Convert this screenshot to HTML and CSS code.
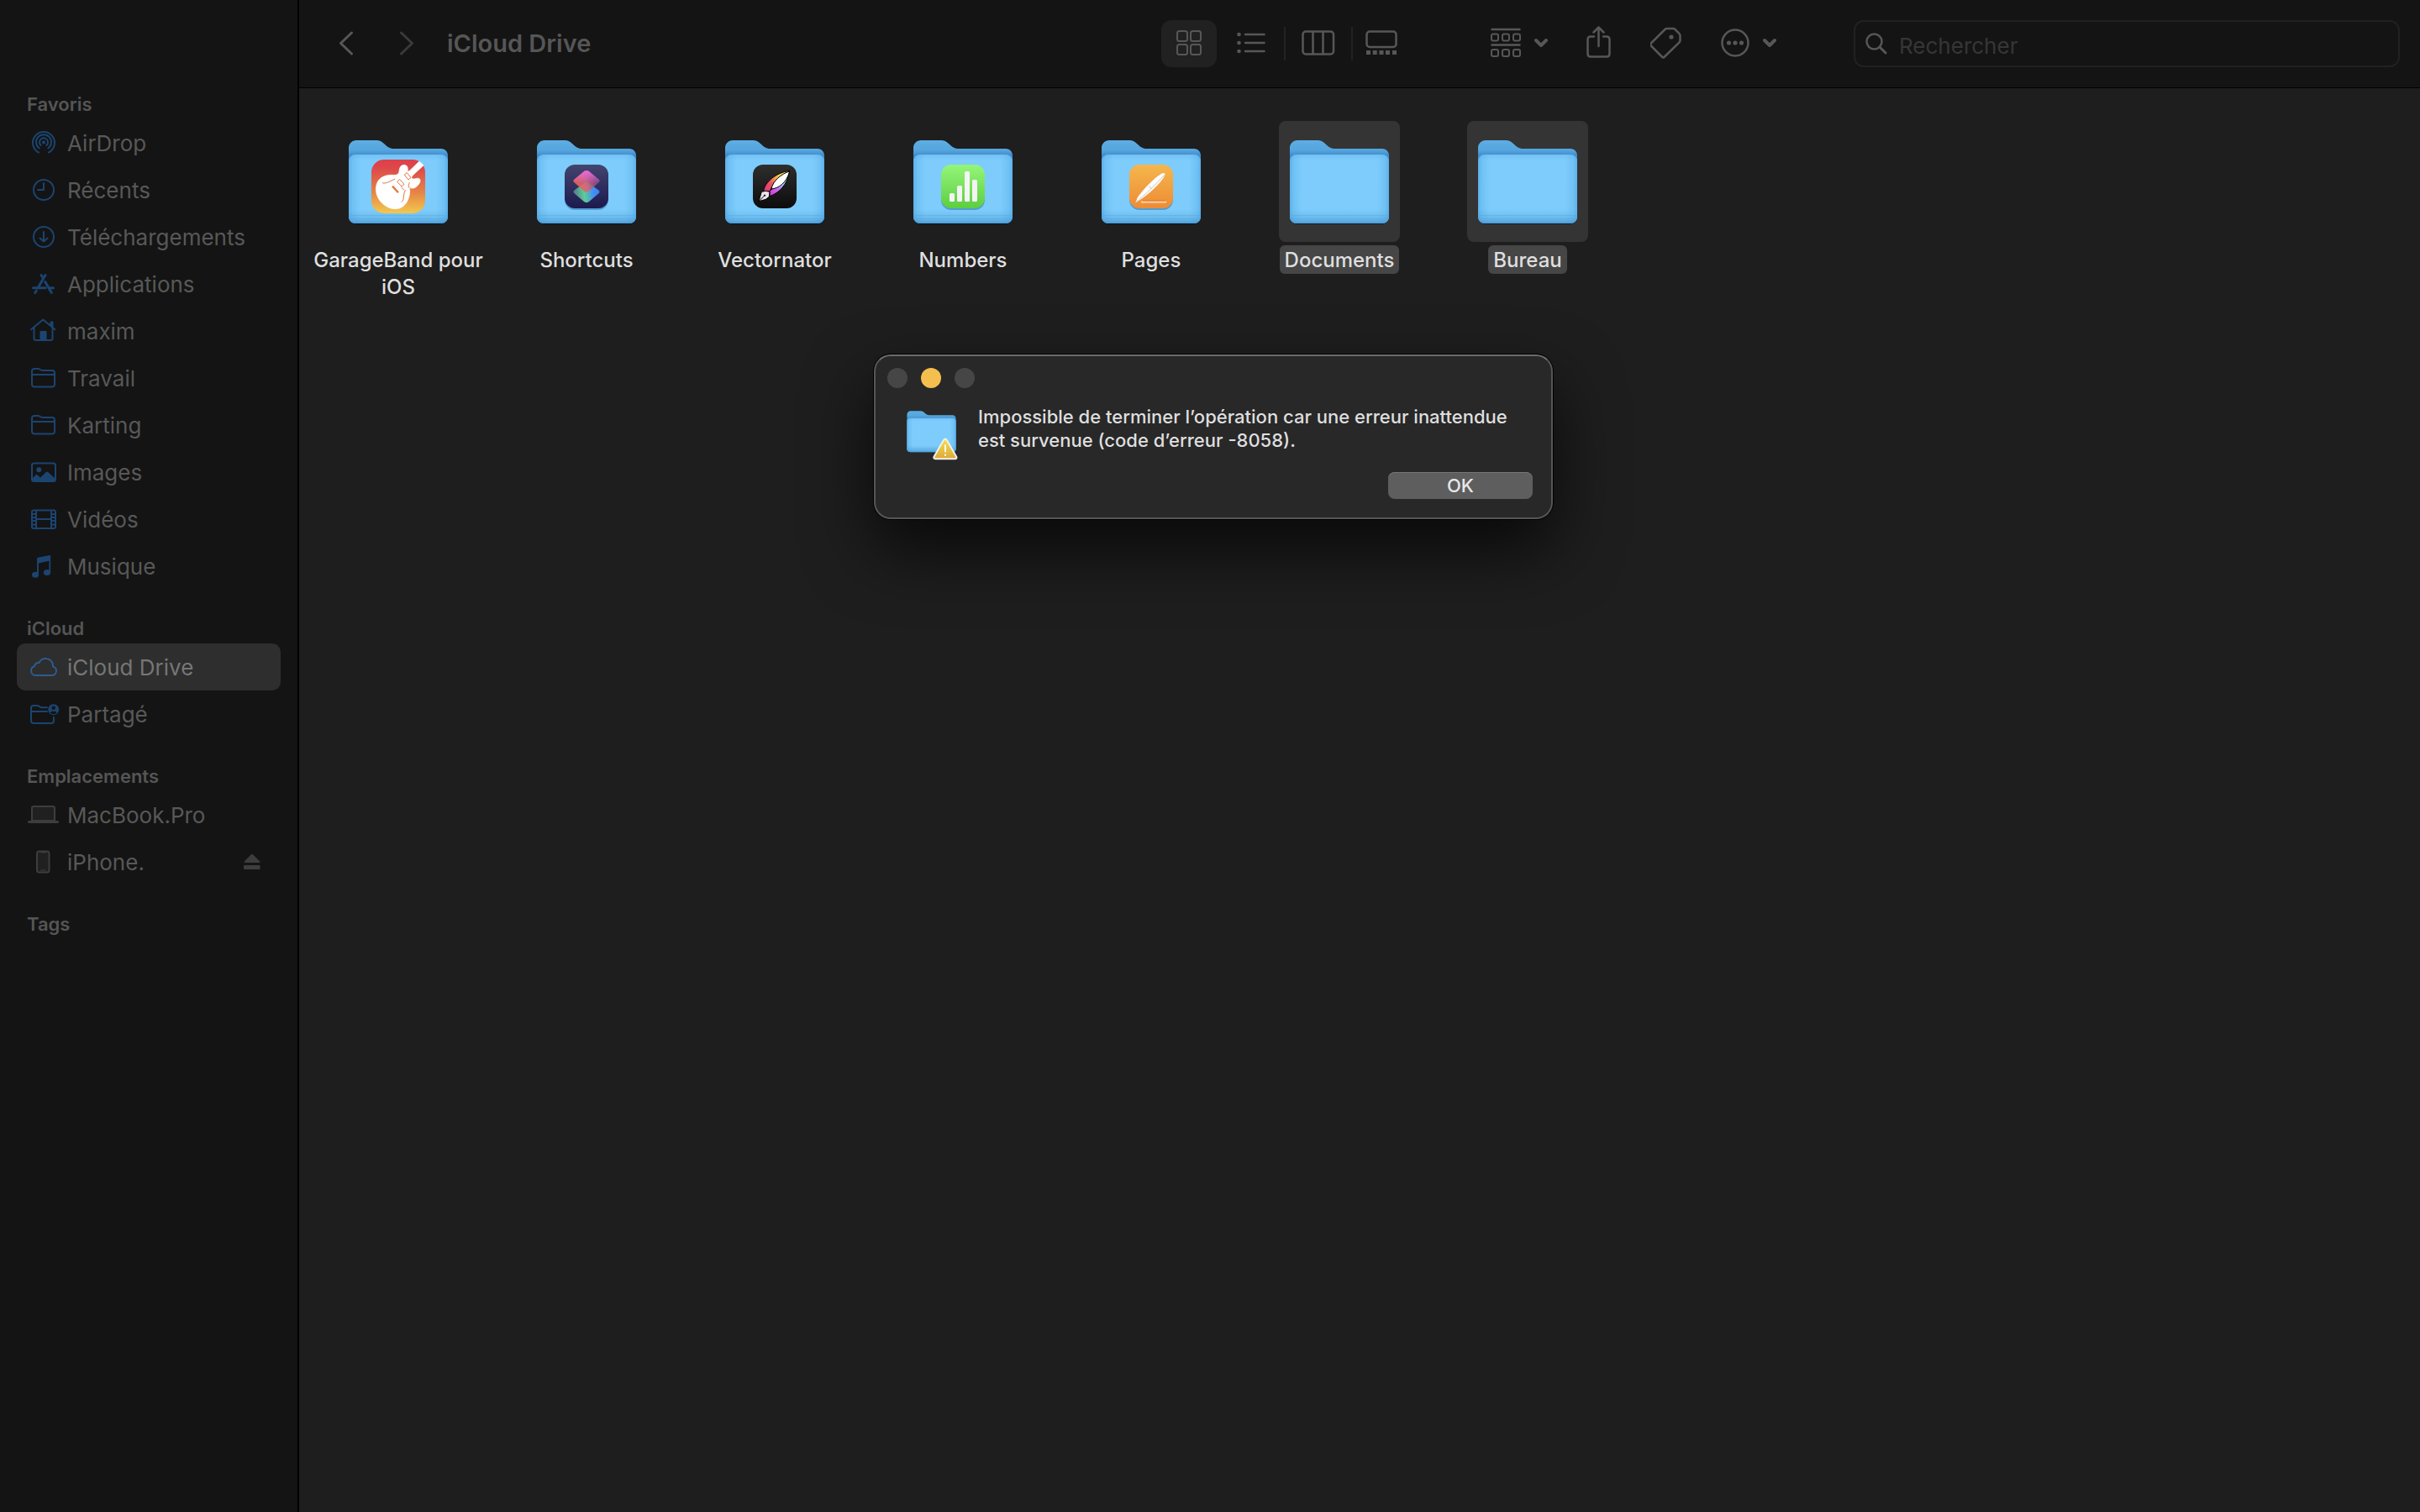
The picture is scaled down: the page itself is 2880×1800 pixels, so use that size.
FILE: index.html
```html
<!DOCTYPE html>
<html lang="fr">
<head>
  <meta charset="utf-8">
  <title>iCloud Drive</title>
  <link rel="stylesheet" href="styles.css">
</head>
<body>
  <!-- shared shapes -->
  <svg class="defs" width="0" height="0" aria-hidden="true">
    <defs>
      <linearGradient id="folder-back" x1="0" y1="0" x2="0" y2="1">
        <stop offset="0" stop-color="#5eaee4"/>
        <stop offset=".12" stop-color="#55a5de"/>
        <stop offset=".19" stop-color="#3f88ca"/>
        <stop offset="1" stop-color="#4a9edb"/>
      </linearGradient>
      <linearGradient id="folder-front" x1="0" y1="0" x2="0" y2="1">
        <stop offset="0" stop-color="#72c1f3"/>
        <stop offset=".08" stop-color="#7dccfc"/>
        <stop offset=".8" stop-color="#7dccfb"/>
        <stop offset=".87" stop-color="#74c3f3"/>
        <stop offset=".94" stop-color="#66b6ea"/>
        <stop offset="1" stop-color="#4c9fdc"/>
      </linearGradient>
      <linearGradient id="folder-sides" x1="0" y1="0" x2="1" y2="0">
        <stop offset="0" stop-color="#3c96d8" stop-opacity=".5"/>
        <stop offset=".04" stop-color="#3c96d8" stop-opacity=".2"/>
        <stop offset=".12" stop-color="#3c96d8" stop-opacity="0"/>
        <stop offset=".88" stop-color="#3c96d8" stop-opacity="0"/>
        <stop offset=".96" stop-color="#3c96d8" stop-opacity=".2"/>
        <stop offset="1" stop-color="#3c96d8" stop-opacity=".5"/>
      </linearGradient>
      <linearGradient id="garage" x1="0" y1="0" x2="0" y2="1">
        <stop offset="0" stop-color="#dc404b"/>
        <stop offset=".15" stop-color="#dd474a"/>
        <stop offset=".6" stop-color="#e58345"/>
        <stop offset="1" stop-color="#f3c84f"/>
      </linearGradient>
      <linearGradient id="shortcuts" x1="0" y1="0" x2="0" y2="1">
        <stop offset="0" stop-color="#43446f"/>
        <stop offset="1" stop-color="#1c1a4e"/>
      </linearGradient>
      <linearGradient id="shard-top" x1=".1" y1=".7" x2=".9" y2=".5">
        <stop offset="0" stop-color="#ee6350"/>
        <stop offset=".5" stop-color="#d4667c"/>
        <stop offset="1" stop-color="#7e4a86"/>
      </linearGradient>
      <linearGradient id="shard-pink" x1="0" y1="0" x2="0" y2="1">
        <stop offset="0" stop-color="#ee69e0"/>
        <stop offset=".6" stop-color="#ee69e0" stop-opacity="0"/>
      </linearGradient>
      <linearGradient id="shard-bottom" x1="0" y1=".5" x2="1" y2=".4">
        <stop offset="0" stop-color="#4f7a88"/>
        <stop offset=".4" stop-color="#60cb98"/>
        <stop offset=".75" stop-color="#4390f0"/>
        <stop offset="1" stop-color="#3a7dfb"/>
      </linearGradient>
      <linearGradient id="vector" x1="0" y1="0" x2="0" y2="1">
        <stop offset="0" stop-color="#2e2e2d"/>
        <stop offset="1" stop-color="#0c0c0d"/>
      </linearGradient>
      <linearGradient id="rainbow-left" x1="0" y1="1" x2="1" y2="0">
        <stop offset="0" stop-color="#d9367e"/>
        <stop offset=".35" stop-color="#ea5560"/>
        <stop offset=".65" stop-color="#f5c747"/>
        <stop offset="1" stop-color="#e9ef7a"/>
      </linearGradient>
      <linearGradient id="rainbow-right" x1="0" y1="1" x2="1" y2="0">
        <stop offset="0" stop-color="#d52fd0"/>
        <stop offset=".35" stop-color="#c66cf0"/>
        <stop offset=".6" stop-color="#9fc6f5"/>
        <stop offset="1" stop-color="#58e0c0"/>
      </linearGradient>
      <linearGradient id="numbers" x1="0" y1="0" x2="0" y2="1">
        <stop offset="0" stop-color="#95f57a"/>
        <stop offset="1" stop-color="#5cce40"/>
      </linearGradient>
      <linearGradient id="pages" x1="0" y1="0" x2="0" y2="1">
        <stop offset="0" stop-color="#f5b74c"/>
        <stop offset="1" stop-color="#ee8b36"/>
      </linearGradient>
      <linearGradient id="warning" x1="0" y1="0" x2="0" y2="1">
        <stop offset="0" stop-color="#f5e04c"/>
        <stop offset="1" stop-color="#dca93a"/>
      </linearGradient>
    </defs>

    <symbol id="folder" viewBox="0 0 144 144">
      <rect x="14" y="100" width="116" height="23" rx="8" fill="#000" opacity=".45"/>
      <path fill="url(#folder-back)" d="M13 32c0-5 4-9 9-9h24c4 0 6 1.500 9 4 4 3.500 6 6 12 6h56c5 0 8 4 8 8v73c0 5-4 8-8 8H21c-5 0-8-4-8-8z"/>
      <rect x="13" y="40" width="118" height="82" rx="8" fill="url(#folder-front)"/>
      <rect x="13" y="40" width="118" height="82" rx="8" fill="url(#folder-sides)"/>
      <path stroke="#5aaade" stroke-width="1" opacity=".5" d="M14 112.500h116M14 116.500h116"/>
    </symbol>

    <symbol id="small-folder" viewBox="0 0 40 40">
      <path class="line" d="M6 27.500V12c0-2 1-3 3-3h4c3 0 3 2 6 2h11c2 0 3 1 3 3v13.500c0 2-1 3-3 3H9c-2 0-3-1-3-3zM6 16h27"/>
    </symbol>
  </svg>

  <div class="window">
    <nav class="sidebar">
      <h2>Favoris</h2>
      <ul>
        <li><a href="#">
          <svg viewBox="0 0 40 40"><path class="line" d="M14 31.500a13 13 0 1 1 12 0M14.700 26.500a9 9 0 1 1 10.600 0M16.600 23a5 5 0 1 1 6.800 0"/><circle cx="20" cy="19.500" r="2"/></svg>
          AirDrop</a></li>
        <li><a href="#">
          <svg viewBox="0 0 40 40"><circle class="line" cx="20" cy="20" r="12"/><path class="line" d="M20 12v8h-7"/></svg>
          Récents</a></li>
        <li><a href="#">
          <svg viewBox="0 0 40 40"><circle class="line" cx="20" cy="20" r="12"/><path class="line" d="M20 14v11.500M15.500 21.500l4.500 4 4.500-4"/></svg>
          Téléchargements</a></li>
        <li><a href="#">
          <svg viewBox="0 0 40 40"><path class="line thick" d="M22 9.500l-8.500 14.500M17 9.500l1.500 2.500M7.500 24.700H22M26.500 24.700h5M11.300 28.200l-1.500 2.300M21.700 17.500l7.600 13"/></svg>
          Applications</a></li>
        <li><a href="#">
          <svg viewBox="0 0 40 40"><path class="line" d="M5 18.300L19.200 6.500 33.500 18.300M8.500 16v13c0 1.300.7 2 2 2h18c1.300 0 2-.7 2-2V9.500h-2V14"/><path d="M15.500 21c0-.7.300-1 1-1h6c.7 0 1 .3 1 1v10h-8z"/></svg>
          maxim</a></li>
        <li><a href="#"><svg><use href="#small-folder"/></svg>Travail</a></li>
        <li><a href="#"><svg><use href="#small-folder"/></svg>Karting</a></li>
        <li><a href="#">
          <svg viewBox="0 0 40 40"><rect class="line" x="6" y="9.500" width="28" height="21.500" rx="2.500"/><circle cx="14.300" cy="17.300" r="3"/><path d="M6 28l4.500-4.600c.7-.6 1.300-.6 2 0L16 26.500l6.500-6.300c1-1 2-1 3 0L34 28v3H6z"/></svg>
          Images</a></li>
        <li><a href="#">
          <svg viewBox="0 0 40 40"><rect class="line" x="6" y="9.500" width="28" height="21.500" rx="2"/><path class="line" d="M11 10v21M29 10v21M11 20h18M6 14h5M6 18h5M6 22h5M6 26.500h5M29 14h5M29 18h5M29 22h5M29 26.500h5"/></svg>
          Vidéos</a></li>
        <li><a href="#">
          <svg viewBox="0 0 40 40"><path d="M12 11c0-.7.300-1 1-1.200L27 7c.8-.2 1.200 0 1.200.8V27h-1.800V13.800L14 16.500V30h-2z"/><ellipse cx="10" cy="30.200" rx="4" ry="3.500"/><ellipse cx="24" cy="27.400" rx="4.200" ry="3.500"/></svg>
          Musique</a></li>
      </ul>

      <h2>iCloud</h2>
      <ul>
        <li class="selected"><a href="#">
          <svg viewBox="0 0 40 40"><path class="line" d="M11 30c-3.500 0-6-2.400-6-5.500 0-2.600 1.600-4.600 4-5.200.3-3 2.600-4.700 5.400-4.300C15.800 12 18.800 10 22.300 10c5 0 8.700 3.800 8.700 8.600v1c2.500.6 4 2.400 4 5 0 3-2.300 5.400-5.500 5.400z"/></svg>
          iCloud Drive</a></li>
        <li><a href="#">
          <svg viewBox="0 0 40 40"><path class="line" d="M24 12.200h-6c-3 0-3-2.200-6-2.200H8c-2 0-3 1-3 3v15c0 2 1 3 3 3h21c2 0 3-1 3-3v-4M5 17h19"/><circle cx="31.700" cy="14.700" r="6.500"/><circle class="hole" cx="31.700" cy="12.800" r="2.200"/><path class="hole" d="M27.700 18.500c1-2.400 7-2.400 8 0-2 2.200-6 2.200-8 0z"/></svg>
          Partagé</a></li>
      </ul>

      <h2>Emplacements</h2>
      <ul class="devices">
        <li><a href="#">
          <svg viewBox="0 0 40 40"><path class="screen" d="M6 27V12c0-1.300.7-2 2-2h23c1.300 0 2 .7 2 2v15z"/><rect x="1" y="27" width="37" height="3" rx="1.500"/></svg>
          MacBook.Pro</a></li>
        <li><a href="#">
          <svg viewBox="0 0 40 40"><rect class="screen" x="12" y="7.500" width="14.500" height="25" rx="2.500"/><path d="M16 8h7l-1 1.500h-5zM16 29.500h6.500v1H16z"/></svg>
          iPhone.</a>
          <button class="eject" aria-label="Éjecter"><svg viewBox="0 0 20 20"><path d="M9 1.300c.6-.7 1.400-.7 2 0l8 8c.8 1 .5 1.700-.7 1.700H1.700C.5 11 .2 10.300 1 9.300z"/><rect x="0" y="14" width="19.500" height="5" rx="1.200"/></svg></button></li>
      </ul>

      <h2>Tags</h2>
    </nav>

    <main>
      <header class="toolbar">
        <button class="nav-button" aria-label="Précédent"><svg width="20" height="32" viewBox="0 0 20 32"><path class="line" d="M16.500 3L3.500 15.500l13 12.500"/></svg></button>
        <button class="nav-button forward" aria-label="Suivant" disabled><svg width="20" height="32" viewBox="0 0 20 32"><path class="line" d="M3.500 3l13 12.500-13 12.500"/></svg></button>
        <h1>iCloud Drive</h1>

        <div class="views">
          <button class="active" aria-label="Icônes"><svg width="30" height="30" viewBox="0 0 30 30"><g class="line"><rect x="1" y="1" width="12" height="12" rx="2.500"/><rect x="17" y="1" width="12" height="12" rx="2.500"/><rect x="1" y="17" width="12" height="12" rx="2.500"/><rect x="17" y="17" width="12" height="12" rx="2.500"/></g></svg></button>
          <button class="list" aria-label="Liste"><svg width="34" height="30" viewBox="0 0 34 30"><path class="line thin" d="M10 5h22.500M10 15h22.500M10 25h22.500"/><circle cx="2.500" cy="5" r="2.300"/><circle cx="2.500" cy="15" r="2.300"/><circle cx="2.500" cy="25" r="2.300"/></svg></button>
          <span class="separator"></span>
          <button aria-label="Colonnes"><svg width="40" height="30" viewBox="0 0 40 30"><g class="line thin"><rect x="1.500" y="1.500" width="36.500" height="27" rx="3.500"/><path d="M13.500 2v26M25.500 2v26"/></g></svg></button>
          <span class="separator"></span>
          <button class="gallery" aria-label="Galerie"><svg width="38" height="30" viewBox="0 0 38 30"><rect class="line thin" x="1.500" y="1.500" width="35" height="18.500" rx="3.500"/><path d="M1 24h5v5H1zM8.700 24h5v5h-5zM16.500 24h5v5h-5zM24 24h5v5h-5zM32 24h5v5h-5z"/></svg></button>
        </div>

        <div class="actions">
          <button aria-label="Grouper">
            <svg width="36" height="36" viewBox="0 0 36 36"><path class="line thin" d="M1.500 2h33M1.500 20.500h33"/><g class="line"><rect x="1" y="7.500" width="8" height="8" rx="2"/><rect x="14" y="7.500" width="8" height="8" rx="2"/><rect x="27" y="7.500" width="8" height="8" rx="2"/><rect x="1" y="26" width="8" height="8" rx="2"/><rect x="14" y="26" width="8" height="8" rx="2"/><rect x="27" y="26" width="8" height="8" rx="2"/></g></svg>
            <svg width="16" height="12" viewBox="0 0 16 12"><path class="line bold" d="M2 3l6 6 6-6"/></svg>
          </button>
          <button aria-label="Partager">
            <svg width="30" height="40" viewBox="0 0 30 40"><path class="line thin" d="M9 12.500H5c-2.300 0-3.500 1.200-3.500 3.500v17c0 2.300 1.200 3.500 3.500 3.500h19c2.300 0 3.500-1.200 3.500-3.500V16c0-2.300-1.200-3.500-3.500-3.500h-4M14.500 24V2M8.500 7.500l6-6 6 6"/></svg>
          </button>
          <button aria-label="Modifier les tags">
            <svg width="38" height="38" viewBox="1 0 38 38"><path class="line thin" d="M2.300 19L18.500 3c.6-.6 1.300-1 2.200-1h7.500c1 0 1.600.3 2.200.9l5.200 5.300c.6.600.9 1.300.9 2.200V16c0 1-.3 1.700-.9 2.300L18 35.500c-1 1-2.200 1-3.200 0L2.300 23c-1.200-1.200-1.200-2.800 0-4z"/><circle cx="26" cy="12" r="2.600"/></svg>
          </button>
          <button aria-label="Actions">
            <svg width="34" height="34" viewBox="0 0 34 34"><circle class="line thin" cx="17" cy="17" r="15.500"/><circle cx="9.500" cy="17" r="2.600"/><circle cx="17" cy="17" r="2.600"/><circle cx="24.500" cy="17" r="2.600"/></svg>
            <svg width="16" height="12" viewBox="0 0 16 12"><path class="line bold" d="M2 3l6 6 6-6"/></svg>
          </button>
        </div>

        <label class="search">
          <svg width="26" height="26" viewBox="0 0 26 26"><circle class="line thin" cx="10.500" cy="10.500" r="9"/><path class="line" d="M17 17l7 7"/></svg>
          <input type="search" placeholder="Rechercher" aria-label="Rechercher">
        </label>
      </header>

      <ul class="files">
        <li>
          <svg class="thumb" viewBox="0 0 144 144">
            <use href="#folder"/>
            <rect x="40" y="46" width="64" height="64" rx="15" fill="url(#garage)"/>
            <g transform="translate(-42 -14) scale(.3333)">
              <path fill="#fff" stroke="#fff" stroke-width="2" stroke-linejoin="round" d="M416 187L384 218 375 224C378 212 375 199 363 199c-13 0-17 11-18 23-1 11-9 14-23 13-26-2-47 9-55 27-9 21-5 44 8 63 14 20 36 32 59 31 20-1 33-13 41-29 8-17 10-32 7-48 8 6 20 4 28-5 8-8 13-17 9-24-5-7-15-1-23-1-7 0-8-6-3-12l39-36c-4-6-10-11-16-14z"/>
              <g fill="none" stroke="#e2743f" stroke-width="3">
                <path d="M285 263c14 5 28-7 46-14M353 332c14-10 3-30 16-43"/>
                <path d="M364 234l9-7 14 17-9 8zM338 259l9-8 16 17-9 8z"/>
              </g>
              <path stroke="#e07a3f" stroke-width="7" d="M321 275l21 23"/>
              <path stroke="#e07a3f" stroke-width="3" fill="none" d="M352 278l12 12M382 262c-4 7-3 13-1 19"/>
            </g>
          </svg>
          <span>GarageBand pour iOS</span>
        </li>
        <li>
          <svg class="thumb" viewBox="0 0 144 144">
            <use href="#folder"/>
            <rect x="46" y="54" width="52" height="52" rx="12" fill="#2a6ea8" opacity=".5"/>
            <rect x="46" y="52" width="52" height="52" rx="12" fill="url(#shortcuts)"/>
            <path fill="url(#shard-bottom)" d="M57.500 82.500L69 74c2-1.400 4-1.400 6 0l11.500 8.500c1.400 1 1.400 2.600 0 3.700L75 96c-2 1.500-4 1.500-6 0l-11.500-9.800c-1.400-1-1.400-2.700 0-3.700z"/>
            <path fill="url(#shard-top)" opacity=".9" d="M57.500 69.500L69 60c2-1.400 4-1.400 6 0l11.500 9.500c1.400 1 1.400 2.600 0 3.700L75 83.500c-2 1.500-4 1.500-6 0L57.500 73.200c-1.400-1-1.400-2.700 0-3.700z"/>
            <path fill="url(#shard-pink)" d="M57.500 69.500L69 60c2-1.400 4-1.400 6 0l11.500 9.500c1.400 1 1.400 2.600 0 3.700L75 83.500c-2 1.500-4 1.500-6 0L57.500 73.200c-1.400-1-1.400-2.700 0-3.700z"/>
          </svg>
          <span>Shortcuts</span>
        </li>
        <li>
          <svg class="thumb" viewBox="0 0 144 144">
            <use href="#folder"/>
            <rect x="46" y="52" width="52" height="52" rx="12" fill="url(#vector)"/>
            <g transform="translate(-50 -14) scale(.3333)" stroke="#000" stroke-width="3" stroke-linejoin="round">
              <path fill="url(#rainbow-left)" d="M326 292c4-30 44-66 94-72-24 14-50 34-64 58l-8 16z"/>
              <path fill="url(#rainbow-right)" d="M348 311c34-12 62-40 70-86-16 22-32 46-58 58l-12 8z"/>
              <path fill="#fff" d="M419 222c-28 8-60 34-65 63 24-2 54-20 65-63z"/>
              <path fill="#e9e3ea" d="M309 329l10-34 15-3 14 3-2 18-12 9z"/>
              <path fill="none" d="M310 328l18-18"/>
              <circle cx="330" cy="308" r="2" fill="#000"/>
            </g>
          </svg>
          <span>Vectornator</span>
        </li>
        <li>
          <svg class="thumb" viewBox="0 0 144 144">
            <use href="#folder"/>
            <rect x="46" y="54" width="52" height="52" rx="12" fill="#2a6ea8" opacity=".5"/>
            <rect x="46" y="52" width="52" height="52" rx="12" fill="url(#numbers)"/>
            <g fill="#f4f4f4">
              <rect x="56" y="86" width="6" height="10" rx="1.500"/>
              <rect x="65" y="77" width="6" height="19" rx="1.500"/>
              <rect x="74" y="60" width="6" height="36" rx="1.500"/>
              <rect x="83" y="70" width="6" height="26" rx="1.500"/>
            </g>
          </svg>
          <span>Numbers</span>
        </li>
        <li>
          <svg class="thumb" viewBox="0 0 144 144">
            <use href="#folder"/>
            <rect x="46" y="54" width="52" height="52" rx="12" fill="#2a6ea8" opacity=".5"/>
            <rect x="46" y="52" width="52" height="52" rx="12" fill="url(#pages)"/>
            <path stroke="#f9d9a9" stroke-width="2" d="M60 96.500h30"/>
            <path stroke="#e2762a" stroke-width="1" d="M62 95h27"/>
            <path fill="#fff" d="M53.500 97.500l2-6C62 82 77 66 85.500 62.200c2-.8 3.700.5 2.700 2.600C83 75 69 87.500 57 95z"/>
            <path stroke="#c9c2bd" stroke-width="1" fill="none" d="M57.500 93.500C68 85 80 73 87.500 64.500M53.500 97.500l3-3.500M69.500 77.500l3 3.500"/>
          </svg>
          <span>Pages</span>
        </li>
        <li class="selected">
          <svg class="thumb" viewBox="0 0 144 144"><use href="#folder"/></svg>
          <span>Documents</span>
        </li>
        <li class="selected">
          <svg class="thumb" viewBox="0 0 144 144"><use href="#folder"/></svg>
          <span>Bureau</span>
        </li>
      </ul>
    </main>
  </div>

  <div class="alert" role="alertdialog" aria-describedby="alert-text">
    <div class="lights">
      <button aria-label="Fermer" disabled></button>
      <button class="minimize" aria-label="Réduire"></button>
      <button aria-label="Agrandir" disabled></button>
    </div>
    <div class="message">
      <svg width="64" height="66" viewBox="0 0 64 66">
        <svg x="-5" y="-4" width="71" height="71" viewBox="0 0 144 144"><use href="#folder"/></svg>
        <path fill="url(#warning)" stroke="#f1f1ee" stroke-width="2" stroke-linejoin="round" d="M45.300 41.500c.8-1.400 2.400-1.400 3.200 0l11.700 20.300c.7 1.300 0 2.400-1.500 2.400H35c-1.400 0-2.200-1.100-1.500-2.400z"/>
        <path stroke="#fff" stroke-width="2" stroke-linecap="round" d="M47 48v7.500M47 59.500v.5"/>
      </svg>
      <p id="alert-text">Impossible de terminer l’opération car une erreur inattendue est survenue (code d’erreur -8058).</p>
    </div>
    <button class="ok">OK</button>
  </div>
</body>
</html>
```

FILE: styles.css
```css
* {
  box-sizing: border-box;
}

body {
  margin: 0;
  background: #1e1e1e;
  color: #dfdfdf;
  font-family: Inter, "Liberation Sans", sans-serif;
}

h1, h2, ul, p {
  margin: 0;
  padding: 0;
}

ul {
  list-style: none;
}

button {
  border: 0;
  padding: 0;
  background: none;
  color: inherit;
  font-family: inherit;
}

svg {
  display: block;
  flex: none;
  fill: currentColor;
}

.defs {
  position: absolute;
}

.line {
  fill: none;
  stroke: currentColor;
  stroke-width: 2;
  stroke-linecap: round;
  stroke-linejoin: round;
}

.line.thick {
  stroke-width: 3;
}

.window {
  display: flex;
  min-height: 100vh;
}

/* sidebar */

.sidebar {
  flex: none;
  width: 356px;
  padding: 78px 20px 0;
  background: #141414;
  border-right: 2px solid #000;
}

.sidebar h2 {
  padding: 28px 0 0 12px;
  font-size: 22px;
  font-weight: 600;
  line-height: 36px;
  color: #555;
}

.sidebar li {
  display: flex;
  align-items: center;
  height: 56px;
  padding: 0 24px 0 12px;
  border-radius: 10px;
}

.sidebar a {
  display: flex;
  flex: 1;
  align-items: center;
  gap: 8px;
  font-size: 26px;
  color: #585858;
  text-decoration: none;
}

.sidebar a svg {
  width: 40px;
  height: 40px;
  color: #1b4470;
}

.sidebar li.selected {
  background: #2e2e2e;
}

.sidebar li.selected a {
  color: #767676;
}

.sidebar li.selected svg {
  color: #2d5c90;
}

.sidebar .devices svg {
  color: #3d3d3d;
}

.sidebar .hole {
  fill: #141414;
}

.sidebar .screen {
  fill: #202020;
  stroke: #3d3d3d;
  stroke-width: 2;
}

.eject svg {
  width: 20px;
  height: 20px;
}

/* toolbar */

main {
  flex: 1;
  min-width: 0;
}

.toolbar {
  display: flex;
  align-items: center;
  height: 105px;
  padding: 0 24px 0 46px;
  background: #141414;
  border-bottom: 1px solid #000;
  color: #575757;
}

.toolbar .line {
  stroke-width: 3;
}

.toolbar .line.bold {
  stroke-width: 4;
}

.toolbar g.line {
  stroke-width: 2;
}

.nav-button {
  margin-right: 52px;
}

.nav-button.forward {
  margin-right: 38px;
  color: #3a3a3a;
}

.toolbar h1 {
  flex: 1;
  padding-bottom: 2px;
  font-size: 29px;
  font-weight: 600;
  color: #565656;
}

.views {
  display: flex;
  align-items: center;
  margin-right: 102px;
}

.views button {
  display: flex;
  align-items: center;
  justify-content: center;
  width: 66px;
  height: 56px;
  padding-bottom: 2px;
  border-radius: 12px;
}

.views .active {
  background: #212121;
}

.toolbar .line.thin {
  stroke-width: 2.5;
}

.views .list {
  margin-left: 8px;
}

.views .gallery {
  width: 56px;
}

.separator {
  width: 2px;
  height: 40px;
  margin: 0 6px;
  background: #222;
}

.actions {
  display: flex;
  gap: 46px;
  margin-right: 92px;
  padding-bottom: 2px;
}

.actions button {
  display: flex;
  align-items: center;
  gap: 16px;
}

.search {
  display: flex;
  align-items: center;
  gap: 14px;
  width: 650px;
  height: 56px;
  padding: 0 12px;
  border: 2px solid #212121;
  border-radius: 12px;
}

.search input {
  flex: 1;
  border: 0;
  padding: 4px 0 0;
  background: none;
  color: #565656;
  font-family: inherit;
  font-size: 26px;
  outline: none;
}

.search input::placeholder {
  color: #363636;
}

/* files */

.files {
  display: grid;
  grid-template-columns: repeat(auto-fill, 224px);
  padding: 39px 6px;
}

.files li {
  display: flex;
  flex-direction: column;
  align-items: center;
  gap: 4px;
  text-align: center;
}

.thumb {
  width: 144px;
  height: 144px;
  border-radius: 8px;
}

.files span {
  padding: 2px 6px 0;
  border-radius: 6px;
  font-size: 24px;
  font-weight: 500;
  line-height: 32px;
}

.files .selected .thumb {
  background: #343434;
}

.files .selected span {
  background: #464646;
}

/* alert */

.alert {
  position: absolute;
  top: 422px;
  left: calc(50% - 400px);
  width: 808px;
  padding: 14px 22px 22px 14px;
  background: #282828;
  border: 2px solid #565656;
  border-top-color: #6c6c6c;
  border-radius: 20px;
  box-shadow: 0 0 0 1px #000, 0 36px 80px rgba(0, 0, 0, .7);
}

.lights {
  display: flex;
  gap: 16px;
}

.lights button {
  width: 24px;
  height: 24px;
  border-radius: 50%;
  background: #464646;
}

.lights .minimize {
  background: #f5bf4f;
}

.message {
  display: flex;
  gap: 22px;
  padding: 20px 0 14px 22px;
}

.message p {
  font-size: 22px;
  font-weight: 500;
  line-height: 28px;
}

.ok {
  display: block;
  width: 172px;
  height: 32px;
  margin-left: auto;
  border-radius: 8px;
  background: #5e5e5e;
  box-shadow: inset 0 1px 0 #777;
  color: #e8e8e8;
  font-size: 22px;
  font-weight: 500;
}
```
